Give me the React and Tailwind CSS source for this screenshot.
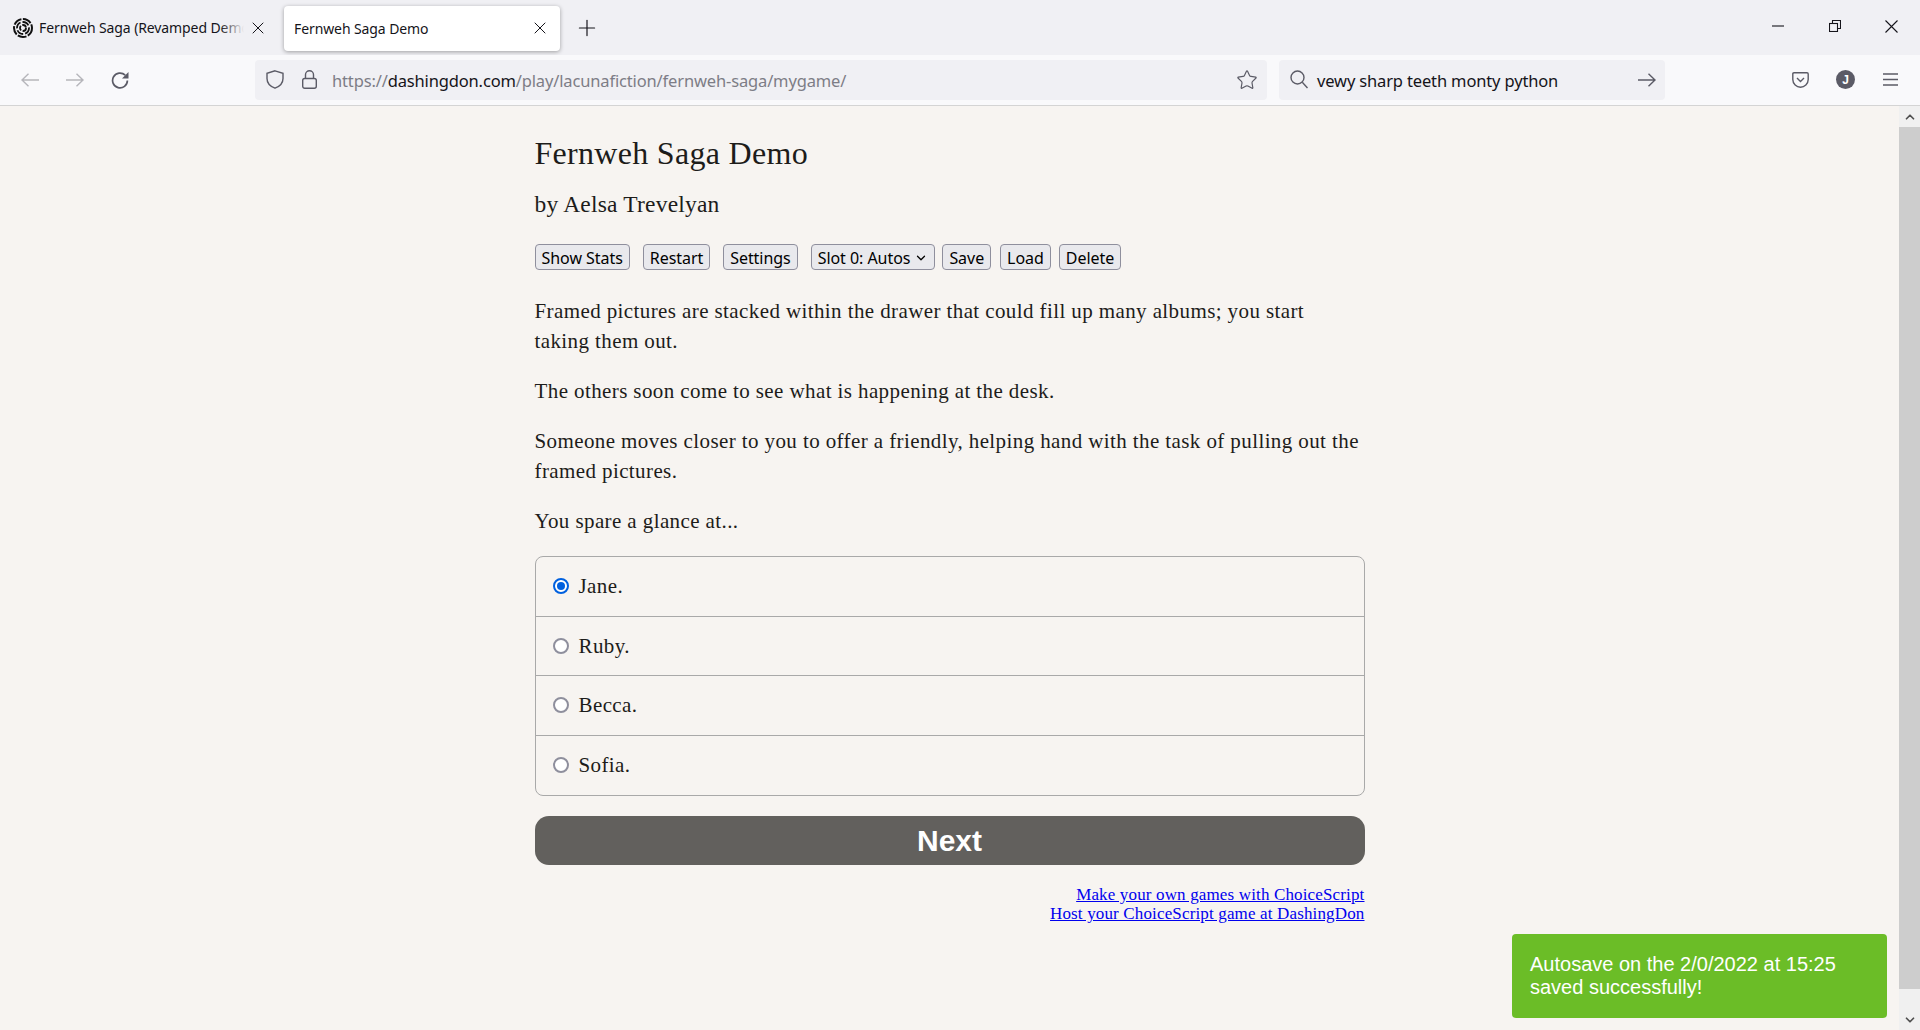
import React from 'react';
import { Star, X, Plus, ChevronDown, ChevronUp } from 'lucide-react';

const choices = ['Jane.', 'Ruby.', 'Becca.', 'Sofia.'];

function Favicon() {
  return (
    <svg width="20" height="20" viewBox="0 0 20 20" fill="none" stroke="#111" className="shrink-0">
      <circle cx="10" cy="10" r="9" strokeWidth="2" strokeDasharray="9 1.5" />
      <circle cx="10" cy="10" r="6" strokeWidth="1.8" strokeDasharray="7 2" />
      <circle cx="10" cy="10" r="3" strokeWidth="1.8" strokeDasharray="5 1.5" />
    </svg>
  );
}

function Arrow({ flip, color = '#b6b6bb', className = '' }) {
  return (
    <svg width="18" height="14" viewBox="0 0 18 14" fill="none" stroke={color} strokeWidth="1.4" className={`shrink-0 ${flip ? '-scale-x-100' : ''} ${className}`}>
      <path d="M1 7H18M7.5 0.7L1 7L7.5 13.3" />
    </svg>
  );
}

function ToolButton({ children, className = '' }) {
  return <button className={`h-[26px] px-[6px] pt-[1px] rounded-[4px] border border-[#8f8f9d] bg-[#e9e9ed] text-[16px] leading-[22px] text-black font-['Noto_Sans',sans-serif] tracking-[-0.05px] ${className}`}>{children}</button>;
}

function TabBar() {
  return (
    <div className="h-[55px] bg-[#f0f0f4] flex items-center font-['Noto_Sans',sans-serif] text-[14px] text-[#15141a] tracking-[-0.1px]">
      <div className="w-[275px] pl-[13px] flex items-center">
        <Favicon />
        <div className="relative ml-[6px] w-[205px] overflow-hidden whitespace-nowrap">
          Fernweh Saga (Revamped Demo
          <div className="absolute right-0 top-0 bottom-0 w-[24px] bg-gradient-to-r from-transparent to-[#f0f0f4]" />
        </div>
        <X size={20} className="ml-[4px] shrink-0" strokeWidth={1.2} />
      </div>
      <div className="ml-[9px] w-[276px] h-[45px] mt-[1px] bg-white rounded-[4px] shadow-[0_1px_4px_rgba(0,0,0,0.35)] flex items-center pl-[10px] pr-[10px]">
        <span className="flex-1">Fernweh Saga Demo</span>
        <X size={20} strokeWidth={1.2} />
      </div>
      <Plus size={26} strokeWidth={1.1} className="ml-[14px]" />
      <div className="ml-auto flex items-center mb-[3px]">
        <svg width="12" height="2" viewBox="0 0 12 2" stroke="#15141a" strokeWidth="1.1"><path d="M0 1H12" /></svg>
        <svg width="12" height="12" viewBox="0 0 12 12" fill="none" stroke="#15141a" strokeWidth="1.1" className="ml-[45px]">
          <rect x="0.5" y="3.5" width="8" height="8" />
          <path d="M3.5 3.5V0.5H11.5V8.5H8.5" />
        </svg>
        <svg width="13" height="13" viewBox="0 0 13 13" stroke="#15141a" strokeWidth="1.1" className="ml-[44px] mr-[22px]"><path d="M0.5 0.5L12.5 12.5M12.5 0.5L0.5 12.5" /></svg>
      </div>
    </div>
  );
}

function NavBar() {
  return (
    <div className="h-[51px] pb-[1px] bg-[#f9f9fb] border-b border-[#d4d4d4] flex items-center text-[#5b5b66]">
      <Arrow className="ml-[21px]" />
      <Arrow flip className="ml-[27px]" />
      <svg width="18" height="18" viewBox="0 0 18 18" fill="none" stroke="#5b5b66" strokeWidth="1.7" className="ml-[27px] shrink-0">
        <path d="M14.2 4.2A7.4 7.4 0 1 0 16.4 9.5" />
        <path d="M17.5 1V7.5H11Z" fill="#5b5b66" stroke="none" />
      </svg>
      <div className="ml-[126px] w-[1012px] h-[40px] bg-[#f0f0f4] rounded-[4px] flex items-center font-['Noto_Sans',sans-serif] text-[16.5px] tracking-[-0.15px]">
        <svg width="18" height="19" viewBox="0 0 18 19" fill="none" stroke="#5b5b66" strokeWidth="1.4" className="ml-[11px] shrink-0">
          <path d="M9 0.8L17 3.3V8.5C17 13.5 13.5 16.5 9 18.2C4.5 16.5 1 13.5 1 8.5V3.3Z" />
        </svg>
        <svg width="15" height="19" viewBox="0 0 15 19" fill="none" stroke="#5b5b66" strokeWidth="1.4" className="ml-[18px] shrink-0">
          <rect x="0.7" y="8.5" width="13.6" height="9.8" rx="2" />
          <path d="M3.5 8.5V4.7A4 4 0 0 1 11.5 4.7V8.5" />
        </svg>
        <span className="ml-[15px] mt-[4px] text-[#7d7d86]">https://<span className="text-[#15141a]">dashingdon.com</span>/play/lacunafiction/fernweh-saga/mygame/</span>
        <Star size={22} strokeWidth={1.3} className="ml-auto mr-[9px]" />
      </div>
      <div className="ml-[12px] w-[386px] h-[40px] bg-[#f0f0f4] rounded-[4px] flex items-center font-['Noto_Sans',sans-serif] text-[16.5px] tracking-[-0.15px] text-[#15141a]">
        <svg width="18" height="19" viewBox="0 0 18 19" fill="none" stroke="#5b5b66" strokeWidth="1.4" className="ml-[11px] shrink-0">
          <circle cx="7.5" cy="7.5" r="6.5" />
          <path d="M12.3 12.3L17.5 18" />
        </svg>
        <span className="ml-[9px] mt-[4px]">vewy sharp teeth monty python</span>
        <Arrow color="#5b5b66" flip className="ml-auto mr-[9px]" />
      </div>
      <svg width="17" height="16" viewBox="0 0 17 16" fill="none" stroke="#5b5b66" strokeWidth="1.4" className="ml-[127px] shrink-0">
        <path d="M2 0.8H15Q16.2 0.8 16.2 2V7.5C16.2 12 12.5 15.2 8.5 15.2C4.5 15.2 0.8 12 0.8 7.5V2Q0.8 0.8 2 0.8Z" />
        <path d="M5 6L8.5 9.5L12 6" />
      </svg>
      <div className="ml-[27px] w-[19px] h-[19px] shrink-0 rounded-full bg-[#5b5b66] text-white text-[12px] font-bold font-['Liberation_Sans',sans-serif] flex items-center justify-center">J</div>
      <svg width="15" height="13" viewBox="0 0 15 13" stroke="#5b5b66" strokeWidth="1.4" className="ml-[28px] shrink-0">
        <path d="M0 1H15M0 6.5H15M0 12H15" />
      </svg>
    </div>
  );
}

function ScrollBar() {
  return (
    <div className="w-[21px] shrink-0 bg-[#f0f0f0] flex flex-col items-center">
      <div className="h-[21px] flex items-center justify-center"><ChevronUp size={14} strokeWidth={3} className="text-[#505050]" /></div>
      <div className="w-full h-[862px] bg-[#cdcdcd]" />
      <div className="mt-auto h-[21px] flex items-center justify-center"><ChevronDown size={14} strokeWidth={3} className="text-[#505050]" /></div>
    </div>
  );
}

export default function App() {
  return (
    <div className="h-screen overflow-hidden flex flex-col bg-[#f7f4f1]">
      <TabBar />
      <NavBar />
      <div className="relative flex-1 flex min-h-0">
        <div className="flex-1 min-w-0">
          <div className="w-[830px] mx-auto font-['Liberation_Serif',serif] text-[#1d1c1a] text-[21px] leading-[30px] tracking-[0.4px]">
            <h1 className="mt-[27px] text-[32px] leading-[40px] tracking-[0.3px]">Fernweh Saga Demo</h1>
            <h2 className="mt-[16px] text-[23.5px] leading-[30px] tracking-[0.2px]">by Aelsa Trevelyan</h2>
            <div className="mt-[25px] flex items-center h-[26px]">
              <ToolButton>Show Stats</ToolButton>
              <ToolButton className="ml-[13px]">Restart</ToolButton>
              <ToolButton className="ml-[13px]">Settings</ToolButton>
              <ToolButton className="ml-[13px] flex items-center">Slot 0: Autos<ChevronDown size={14} strokeWidth={2.2} className="ml-[4px]" /></ToolButton>
              <ToolButton className="ml-[7px]">Save</ToolButton>
              <ToolButton className="ml-[9px]">Load</ToolButton>
              <ToolButton className="ml-[8px]">Delete</ToolButton>
            </div>
            <p className="mt-[26px]">Framed pictures are stacked within the drawer that could fill up many albums; you start taking them out.</p>
            <p className="mt-[20px]">The others soon come to see what is happening at the desk.</p>
            <p className="mt-[20px]">Someone moves closer to you to offer a friendly, helping hand with the task of pulling out the framed pictures.</p>
            <p className="mt-[20px]">You spare a glance at...</p>
            <div className="mt-[20px] border border-[#a9a9a9] rounded-[8px] divide-y divide-[#a9a9a9]">
              {choices.map((c, i) => (
                <div key={c} className="h-[59.5px] flex items-center pl-[17px]">
                  {i === 0 ? (
                    <span className="w-[16px] h-[16px] rounded-full border-2 border-[#0060df] bg-white flex items-center justify-center">
                      <span className="w-[8px] h-[8px] rounded-full bg-[#0060df]" />
                    </span>
                  ) : (
                    <span className="w-[16px] h-[16px] rounded-full border-2 border-[#8f8f9d] bg-white" />
                  )}
                  <span className="ml-[10px]">{c}</span>
                </div>
              ))}
            </div>
            <button className="mt-[20px] w-full h-[49px] rounded-[14px] bg-[#62605d] text-white text-[30px] font-bold font-['Liberation_Sans',sans-serif] tracking-normal">Next</button>
            <div className="mt-[20px] text-right text-[17px] leading-[19px] tracking-[0.15px] text-[#0000ee] underline">
              <div>Make your own games with ChoiceScript</div>
              <div>Host your ChoiceScript game at DashingDon</div>
            </div>
          </div>
        </div>
        <ScrollBar />
        <div className="absolute right-[33px] bottom-[12px] w-[375px] h-[84px] rounded-[4px] bg-[#6bbd27] text-white text-[20px] leading-[23px] font-['Liberation_Sans',sans-serif] pl-[18px] pt-[19px]">
          Autosave on the 2/0/2022 at 15:25<br />saved successfully!
        </div>
      </div>
    </div>
  );
}
